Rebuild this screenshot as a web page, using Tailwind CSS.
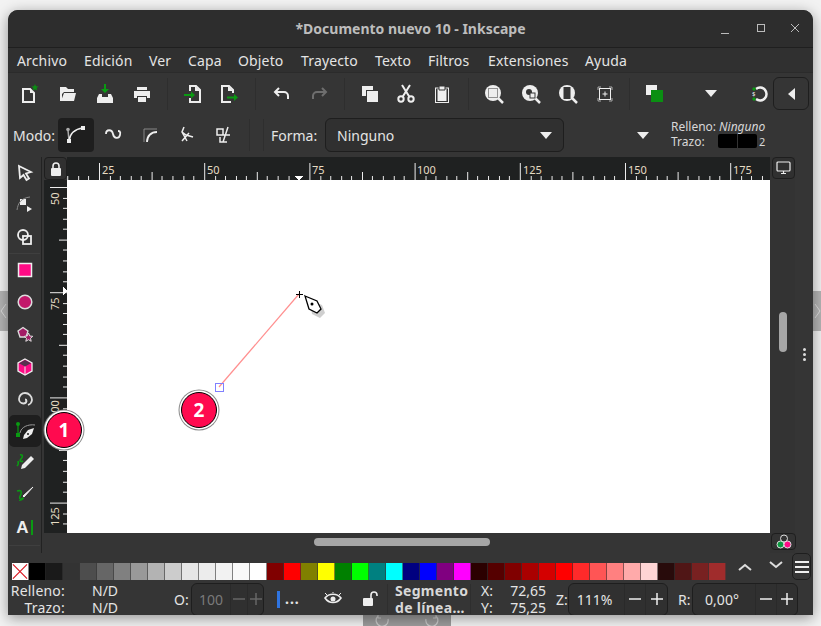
<!DOCTYPE html>
<html>
<head>
<meta charset="utf-8">
<title>Documento nuevo 10 - Inkscape</title>
<script src="https://cdn.jsdelivr.net/npm/@tailwindcss/browser@4"></script>
</head>
<body class="w-[821px] h-[626px] overflow-hidden relative bg-[#f2f2f2] font-['Noto_Sans',sans-serif] text-[14px] text-[#e4e4e4]">

<!-- neighbouring windows peeking out -->
<div class="absolute left-0 top-[291px] w-[8px] h-[40px] bg-[#b4b4b4] flex items-center"><svg class="w-[8px] h-[20px]" viewBox="0 0 8 20"><path d="M6 3L1 10l5 7" fill="none" stroke="#ddd"/></svg></div>
<div class="absolute right-0 top-[291px] w-[8px] h-[40px] bg-[#b4b4b4] flex items-center"><svg class="w-[8px] h-[20px]" viewBox="0 0 8 20"><path d="M2 3l5 7-5 7" fill="none" stroke="#ddd"/></svg></div>
<div class="absolute left-[363px] top-[615px] w-[88px] h-[11px] bg-[#9c9c9c] flex justify-center gap-[32px] overflow-hidden">
  <svg class="w-[16px] h-[11px]" viewBox="0 0 16 11"><path d="M3 1a6 6 0 1 0 10 3M3 0v3h3" fill="none" stroke="#ccc" stroke-width="1.200"/></svg>
  <svg class="w-[16px] h-[11px]" viewBox="0 0 16 11"><path d="M13 1a6 6 0 1 1-10 3M13 0v3h-3" fill="none" stroke="#ccc" stroke-width="1.200"/></svg>
</div>

<div class="absolute left-[8px] top-[10px] w-[805px] h-[605px] flex flex-col rounded-t-[10px] bg-[#353535] shadow-[0_3px_14px_rgba(0,0,0,0.4)] overflow-hidden">

  <!-- title bar -->
  <div class="h-[38px] shrink-0 relative flex items-center justify-center bg-[#2d2d2d] border-b border-[#1f1f1f]">
    <span class="font-bold text-[#bdbdbd] text-[14px]">*Documento nuevo 10 - Inkscape</span>
    <div class="absolute right-0 top-0 h-full flex items-center">
      <svg class="w-[34px] h-[34px]" viewBox="0 0 34 34"><path d="M10 21.500h8" stroke="#bbb" stroke-width="1"/></svg>
      <svg class="w-[34px] h-[34px]" viewBox="0 0 34 34"><rect x="12.500" y="12.500" width="7" height="7" fill="none" stroke="#bbb"/></svg>
      <svg class="w-[34px] h-[34px]" viewBox="0 0 34 34"><path d="M12 12l8 8M20 12l-8 8" stroke="#bbb" stroke-width="1"/></svg>
    </div>
  </div>

  <!-- menu bar -->
  <div class="h-[25px] shrink-0 flex items-center pl-[9px] bg-[#303030] border-b border-[#2b2b2b] text-[14px] tracking-[0.15px]">
    <span class="w-[67px]">Archivo</span>
    <span class="w-[65px]">Edición</span>
    <span class="w-[39px]">Ver</span>
    <span class="w-[50px]">Capa</span>
    <span class="w-[63px]">Objeto</span>
    <span class="w-[74px]">Trayecto</span>
    <span class="w-[53px]">Texto</span>
    <span class="w-[60px]">Filtros</span>
    <span class="w-[97px]">Extensiones</span>
    <span>Ayuda</span>
  </div>

  <!-- commands bar -->
  <div class="h-[45px] shrink-0 flex items-center pb-[4px]">
    <div class="flex items-center pl-[2px]">
      <div class="w-[38px] flex justify-center"><svg class="w-[20px] h-[20px]" viewBox="0 0 20 20"><path d="M4 5h7l4 4v9H4z" fill="none" stroke="#eee" stroke-width="2"/><path d="M11 5v4h4" fill="#eee"/><path d="M16 0l1 2.300 2.500.2-1.900 1.600.6 2.400L16 5.200l-2.200 1.300.6-2.400-1.900-1.600 2.500-.2z" fill="#0a8f12"/></svg></div>
      <div class="w-[38px] flex justify-center ml-[1px] -mr-[1px]"><svg class="w-[20px] h-[20px]" viewBox="0 0 20 20"><path d="M2 3h6l2 2h6v3H6L4 10v7H2z" fill="#eee"/><path d="M6 9h12l-2 8H3z" fill="#eee"/></svg></div>
      <div class="w-[37px] flex justify-center"><svg class="w-[20px] h-[20px]" viewBox="0 0 20 20"><path d="M10 0v6" stroke="#0a9a12" stroke-width="2"/><path d="M6 5h8l-4 4z" fill="#0a9a12"/><path d="M4 10h3v3h6v-3h3l2 4v5H2v-5z" fill="#eee"/></svg></div>
      <div class="w-[37px] flex justify-center"><svg class="w-[20px] h-[20px]" viewBox="0 0 20 20"><path d="M5 3h10v3H5zM2 7h16v7h-3v-2H5v2H2zM6 13h8v5H6z" fill="#eee"/></svg></div>
    </div>
    <div class="w-px h-[32px] bg-[#2e2e2e] ml-[7px] mr-[7px]"></div>
    <div class="flex items-center">
      <div class="w-[36px] flex justify-center"><svg class="w-[20px] h-[20px]" viewBox="0 0 20 20"><path d="M7 7V2h6l4 4v12H7v-4" fill="none" stroke="#eee" stroke-width="2"/><path d="M12 2v5h5" fill="#eee"/><path d="M1 11h8" stroke="#0a9a12" stroke-width="2"/><path d="M8 7.500l4 3.500-4 3.500z" fill="#0a9a12"/></svg></div>
      <div class="w-[36px] flex justify-center"><svg class="w-[20px] h-[20px]" viewBox="0 0 20 20"><path d="M14 9V6l-4-4H3v16h9" fill="none" stroke="#eee" stroke-width="2"/><path d="M9 2v5h5" fill="#eee"/><path d="M8 13.500h8" stroke="#0a9a12" stroke-width="2"/><path d="M15 10l4 3.500-4 3.500z" fill="#0a9a12"/></svg></div>
    </div>
    <div class="w-px h-[32px] bg-[#2e2e2e] ml-[8px] mr-[7px]"></div>
    <div class="flex items-center">
      <div class="w-[37px] flex justify-center"><svg class="w-[20px] h-[20px]" viewBox="0 0 20 20"><path d="M7 4L3 8l4 4" fill="none" stroke="#eee" stroke-width="2"/><path d="M4 8h8a4 4 0 0 1 4 4v3" fill="none" stroke="#eee" stroke-width="2"/></svg></div>
      <div class="w-[37px] flex justify-center"><svg class="w-[20px] h-[20px]" viewBox="0 0 20 20"><path d="M13 4l4 4-4 4" fill="none" stroke="#6e6e6e" stroke-width="2"/><path d="M16 8H8a4 4 0 0 0-4 4v3" fill="none" stroke="#6e6e6e" stroke-width="2"/></svg></div>
    </div>
    <div class="w-px h-[32px] bg-[#2e2e2e] ml-[7px] mr-[6px]"></div>
    <div class="flex items-center">
      <div class="w-[37px] flex justify-center"><svg class="w-[20px] h-[20px]" viewBox="0 0 20 20"><path d="M2 2h11v4H6v6H2z" fill="#eee"/><path d="M7 7h11v11H7z" fill="#eee"/></svg></div>
      <div class="w-[36px] flex justify-center"><svg class="w-[20px] h-[20px]" viewBox="0 0 20 20"><circle cx="5" cy="15" r="2.700" fill="none" stroke="#eee" stroke-width="2"/><circle cx="15" cy="15" r="2.700" fill="none" stroke="#eee" stroke-width="2"/><path d="M6.500 13L14 1M13.500 13L6 1" stroke="#eee" stroke-width="2"/></svg></div>
      <div class="w-[36px] flex justify-center"><svg class="w-[20px] h-[20px]" viewBox="0 0 20 20"><rect x="3.500" y="4" width="13" height="14.500" fill="none" stroke="#eee"/><path d="M5.500 5h9v12h-9z" fill="#eee"/><path d="M7 2h6v4H7z" fill="#eee" stroke="#353535"/></svg></div>
    </div>
    <div class="w-px h-[32px] bg-[#2e2e2e] ml-[8px] mr-[6px]"></div>
    <div class="flex items-center">
      <div class="w-[37px] flex justify-center"><svg class="w-[20px] h-[20px]" viewBox="0 0 20 20"><circle cx="9" cy="9" r="8" fill="#eee"/><path d="M14 14l5 5" stroke="#eee" stroke-width="2.500"/><rect x="4.500" y="4.500" width="9" height="9" fill="none" stroke="#353535" stroke-dasharray="1 1"/></svg></div>
      <div class="w-[37px] flex justify-center"><svg class="w-[20px] h-[20px]" viewBox="0 0 20 20"><circle cx="9" cy="9" r="8" fill="#eee"/><path d="M14 14l5 5" stroke="#eee" stroke-width="2.500"/><circle cx="8" cy="8" r="3" fill="#353535"/><rect x="9" y="9" width="5" height="5" fill="#eee" stroke="#353535"/></svg></div>
      <div class="w-[37px] flex justify-center"><svg class="w-[20px] h-[20px]" viewBox="0 0 20 20"><circle cx="9" cy="9" r="8" fill="#eee"/><path d="M14 14l5 5" stroke="#eee" stroke-width="2.500"/><rect x="5.500" y="3" width="7" height="12" fill="#353535"/></svg></div>
      <div class="w-[37px] flex justify-center"><svg class="w-[20px] h-[20px]" viewBox="0 0 20 20"><path d="M3 6V3h3M14 3h3v3M17 14v3h-3M6 17H3v-3" fill="none" stroke="#aaa"/><rect x="4.500" y="4.500" width="11" height="11" fill="none" stroke="#eee"/><path d="M7.500 10h5M10 7.500v5" stroke="#eee"/></svg></div>
    </div>
    <div class="w-px h-[32px] bg-[#2e2e2e] ml-[6px] mr-[6px]"></div>
    <div class="w-[38px] flex justify-center"><svg class="w-[20px] h-[20px]" viewBox="0 0 20 20"><path d="M1 1h11v5H6v5H1z" fill="#eee"/><rect x="6" y="6" width="12" height="12" fill="#0a8f12"/></svg></div>
    <div class="w-[74px] flex justify-center"><svg class="w-[12px] h-[7px]" viewBox="0 0 12 7"><path d="M0 0h12L6 7z" fill="#eee"/></svg></div>
    <div class="w-[21px] flex justify-center shrink-0"><svg class="w-[20px] h-[20px] shrink-0" viewBox="0 0 20 20"><path d="M7 4.900a6.500 6.500 0 1 1 0 10.200" fill="none" stroke="#eee" stroke-width="2.500"/><circle cx="5" cy="5" r="1.700" fill="#0a9a12"/><circle cx="5" cy="15" r="1.700" fill="#0a9a12"/><text x="3" y="12" font-size="6" fill="#eee">$</text></svg></div>
    <div class="ml-[4px] w-[36px] h-[33px] rounded-[6px] border border-[#1e1e1e] flex items-center justify-center"><svg class="w-[7px] h-[12px]" viewBox="0 0 7 12"><path d="M7 0v12L0 6z" fill="#eee"/></svg></div>
  </div>

  <!-- tool controls -->
  <div class="h-[39px] shrink-0 flex items-center pb-[5px]">
    <span class="ml-[5px] w-[45px]">Modo:</span>
    <div class="w-[36px] h-[34px] rounded-[4px] bg-[#1e1e1e] flex items-center justify-center"><svg class="w-[22px] h-[22px]" viewBox="0 0 22 22"><path d="M4 17L3 6" stroke="#aaa" stroke-width="1.500"/><path d="M4 17C5 9 10 5 18 4" fill="none" stroke="#eee" stroke-width="1.500"/><rect x="2" y="15" width="4" height="4" fill="#eee"/><rect x="16" y="2" width="4" height="4" fill="#eee"/><circle cx="3" cy="5.500" r="1.800" fill="#aaa"/></svg></div>
    <div class="w-[37px] flex justify-center"><svg class="w-[20px] h-[20px]" viewBox="0 0 20 20"><path d="M3 9c0-5 6-5 7 0s6 5 7 1-1-4-2-4" fill="none" stroke="#eee" stroke-width="1.800"/></svg></div>
    <div class="w-[37px] flex justify-center"><svg class="w-[20px] h-[20px]" viewBox="0 0 20 20"><path d="M4 17V4h13" fill="none" stroke="#888"/><path d="M7 17c0-6 4-10 10-10" fill="none" stroke="#eee" stroke-width="1.800"/></svg></div>
    <div class="w-[37px] flex justify-center"><svg class="w-[20px] h-[20px]" viewBox="0 0 20 20"><path d="M7 2L5 7l5 9M5 7l4 3 7 2M12 8l-7 8" fill="none" stroke="#eee" stroke-width="1.500"/></svg></div>
    <div class="w-[37px] flex justify-center"><svg class="w-[20px] h-[20px]" viewBox="0 0 20 20"><path d="M3 4h6v6H3zM9 10h7M14 2L9 17M6 12v5h7" fill="none" stroke="#eee" stroke-width="1.500"/></svg></div>
    <div class="w-px h-[32px] bg-[#2e2e2e] ml-[7px]"></div>
    <div class="w-px h-[32px] bg-[#2e2e2e] ml-[13px]"></div>
    <span class="ml-[7px] w-[54px]">Forma:</span>
    <div class="w-[239px] h-[34px] rounded-[6px] border border-[#1e1e1e] bg-[#303030] flex items-center justify-between pl-[11px] pr-[11px]">
      <span>Ninguno</span>
      <svg class="w-[12px] h-[7px]" viewBox="0 0 12 7"><path d="M0 0h12L6 7z" fill="#eee"/></svg>
    </div>
    <svg class="w-[12px] h-[7px] ml-[73px]" viewBox="0 0 12 7"><path d="M0 0h12L6 7z" fill="#eee"/></svg>
    <div class="ml-[22px] -mt-[3px] flex flex-col text-[12px] leading-[15px] text-[#d8d8d8]">
      <div class="flex"><span>Relleno:</span><span class="italic ml-[3px]">Ninguno</span></div>
      <div class="flex items-center"><span class="w-[47px]">Trazo:</span><div class="w-[39px] h-[14px] rounded-[2px] bg-black flex justify-center"><div class="w-px bg-[#333]"></div></div><span class="ml-[2px] text-[11px]">2</span></div>
    </div>
  </div>

  <!-- main area -->
  <div class="h-[396px] shrink-0 flex">
    <!-- toolbox -->
    <div class="w-[34px] shrink-0 border-r border-[#222] flex flex-col items-center">
      <div class="h-[32px] flex items-center"><svg class="w-[18px] h-[18px]" viewBox="0 0 18 18"><path d="M3 2l12 6-5 1.500 3 5-2.500 1.500-3-5L4 14z" fill="none" stroke="#eee" stroke-width="1.800"/></svg></div>
      <div class="h-[32px] flex items-center"><svg class="w-[18px] h-[18px]" viewBox="0 0 18 18"><rect x="4" y="3" width="6" height="6" fill="#eee"/><path d="M1 14C2 7 5 2 14 1" fill="none" stroke="#888"/><path d="M11 10l5 3-5 3z" fill="#eee"/></svg></div>
      <div class="h-[32px] flex items-center"><svg class="w-[18px] h-[18px]" viewBox="0 0 18 18"><circle cx="7" cy="7" r="5" fill="none" stroke="#eee" stroke-width="1.800"/><rect x="7" y="8" width="8" height="8" fill="none" stroke="#eee" stroke-width="1.800"/></svg></div>
      <div class="w-[31px] h-px bg-[#3f3f3f]"></div>
      <div class="h-[32px] flex items-center"><svg class="w-[18px] h-[18px]" viewBox="0 0 18 18"><rect x="2.500" y="2.500" width="13" height="13" fill="#ff0a85" stroke="#eee" stroke-width="1.500"/></svg></div>
      <div class="h-[32px] flex items-center"><svg class="w-[18px] h-[18px]" viewBox="0 0 18 18"><circle cx="9" cy="9" r="6.800" fill="#c2186b" stroke="#ddd" stroke-width="1.500"/></svg></div>
      <div class="h-[33px] flex items-center"><svg class="w-[18px] h-[18px]" viewBox="0 0 18 18"><path d="M7 1.500L12 5 10 11H4L2 5z" fill="#a31c66" stroke="#ddd" stroke-width="1.300"/><path d="M12.500 7l1.300 3 3 .3-2.300 2 .7 3-2.700-1.600-2.700 1.600.7-3-2.300-2 3-.3z" fill="#a31c66" stroke="#ddd"/></svg></div>
      <div class="h-[31px] flex items-center"><svg class="w-[18px] h-[18px]" viewBox="0 0 18 18"><path d="M9 1l7 4v8l-7 4-7-4V5z" fill="#ff0a85" stroke="#eee" stroke-width="1.300"/><path d="M9 2l6 3.200L9 8.500 3 5.200z" fill="#5a3050"/><path d="M9 8.500V17" stroke="#eee"/></svg></div>
      <div class="h-[33px] flex items-center"><svg class="w-[18px] h-[18px]" viewBox="0 0 18 18"><path d="M9 9.500a1.500 1.500 0 0 1 1.500 1.500 3 3 0 0 1-3 2.500A4.500 4.500 0 0 1 3 9a6 6 0 0 1 6-6 7 7 0 0 1 7 7 6 6 0 0 1-4 5" fill="none" stroke="#ddd" stroke-width="1.800"/></svg></div>
      <div class="h-[32px] w-[32px] rounded-[5px] bg-[#1e1e1e] flex items-center justify-center"><svg class="w-[22px] h-[22px]" viewBox="0 0 22 22"><path d="M4 4l0 12" stroke="#0a9a12" stroke-width="1.200"/><circle cx="4" cy="4" r="2" fill="#0a9a12"/><rect x="2" y="13" width="4" height="4" fill="#0a9a12"/><path d="M6 13c1-6 8-9 15-8" fill="none" stroke="#999"/><path d="M20 8l-2 6-5 4-4 1 1-4 4-5z" fill="#eee"/><circle cx="14" cy="14" r="1" fill="#1e1e1e"/></svg></div>
      <div class="h-[32px] flex items-center"><svg class="w-[20px] h-[20px]" viewBox="0 0 20 20"><path d="M5 2c3-1 3 2 1 4s0 3 2 2M3 8c1 3 0 4-1 5" fill="none" stroke="#0a9a12" stroke-width="1.600"/><path d="M16 3l3 3-9 9-4 1 1-4z" fill="#eee"/></svg></div>
      <div class="h-[32px] flex items-center"><svg class="w-[20px] h-[20px]" viewBox="0 0 20 20"><path d="M2 6c4-1 5 0 4 3s-2 3-1 5" fill="none" stroke="#0a9a12" stroke-width="1.600"/><path d="M18 2L9 12l-1-1z" fill="#eee" stroke="#eee"/><path d="M8 12c-1 1-3 1-4 4 2 0 5-1 5-3z" fill="#0a9a12"/></svg></div>
      <div class="h-[33px] flex items-center gap-[2px]"><span class="font-bold text-[17px] text-[#eee] leading-none font-['Liberation_Sans',sans-serif]">A</span><span class="w-[2px] h-[15px] bg-[#0a9a12]"></span></div>
      <div class="w-[31px] h-px bg-[#3f3f3f] mt-[1px]"></div>
    </div>

    <!-- rulers, canvas and bottom scrollbar -->
    <div class="w-[726px] ml-[2px] shrink-0 flex flex-col">
      <div class="h-[23px] flex">
        <div class="w-[23px] h-[23px] rounded-[4px] border border-[#1e1e1e] bg-[#303030] flex items-center justify-center"><svg class="w-[12px] h-[14px]" viewBox="0 0 12 14"><path d="M3 6V4a3 3 0 0 1 6 0v2" fill="none" stroke="#eee" stroke-width="1.600"/><rect x="1" y="6" width="10" height="8" rx="1" fill="#eee"/></svg></div>
        <svg class="w-[703px] h-[23px] bg-[#1f2121]" viewBox="0 0 703 23" font-family="'Noto Sans',sans-serif" font-size="11" fill="#e6dcc4" shape-rendering="crispEdges">
          <defs><pattern id="rulerH" patternUnits="userSpaceOnUse" x="32" y="0" width="105.200" height="23">
            <path d="M.5 6v17M11 19v4M21.500 19v4M32 19v4M42.500 19v4M53 15v8M63.500 19v4M74 19v4M84.500 19v4M95 19v4" stroke="#eee" fill="none"/>
          </pattern></defs>
          <rect width="703" height="23" fill="url(#rulerH)"/>
          <text x="35" y="17">25</text><text x="140" y="17">50</text><text x="245" y="17">75</text><text x="350" y="17">100</text><text x="456" y="17">125</text><text x="561" y="17">150</text><text x="666" y="17">175</text>
          <path d="M227 19h10l-5 4z" fill="#fff"/>
        </svg>
      </div>
      <div class="h-[353px] flex">
        <svg class="w-[23px] h-[353px] bg-[#1f2121]" viewBox="0 0 23 353" font-family="'Noto Sans',sans-serif" font-size="11" fill="#e6dcc4" shape-rendering="crispEdges">
          <defs><pattern id="rulerV" patternUnits="userSpaceOnUse" x="0" y="7" width="23" height="105.200">
            <path d="M6 .5h17M19 11h4M19 21.500h4M19 32h4M19 42.500h4M15 53h8M19 63.500h4M19 74h4M19 84.500h4M19 95h4" stroke="#eee" fill="none"/>
          </pattern></defs>
          <rect width="23" height="353" fill="url(#rulerV)"/>
          <text transform="translate(15 25) rotate(-90)">50</text>
          <text transform="translate(15 130) rotate(-90)">75</text>
          <text transform="translate(15 239) rotate(-90)">100</text>
          <text transform="translate(15 346) rotate(-90)">125</text>
          <path d="M19 106l4 5-4 5z" fill="#fff"/>
        </svg>
        <!-- canvas -->
        <div class="w-[703px] h-[353px] bg-white relative">
          <svg class="absolute left-0 top-0 w-[703px] h-[353px]" viewBox="0 0 703 353">
            <path d="M152 207L232 114" stroke="#ff8f8f" stroke-width="1.200"/>
            <rect x="148.500" y="203.500" width="8" height="8" fill="none" stroke="#8080ff"/>
            <path d="M229 114.500h7M232.500 111v7" stroke="#000" stroke-width="1"/>
            <path d="M240 119l13 5 3 8-5 5-8-4z" fill="#cfcfcf" transform="translate(2 1)"/>
            <path d="M238 116l12 5 4 8-4 4-8-4z" fill="#fff" stroke="#000" stroke-width="1.300"/>
            <circle cx="245" cy="124" r="1.500" fill="#000"/>
          </svg>
        </div>
      </div>
      <div class="h-[20px] flex justify-center pt-[5px] pr-[10px]"><div class="w-[176px] h-[8px] rounded-full bg-[#a6a6a6]"></div></div>
    </div>

    <!-- right gutter -->
    <div class="w-[25px] shrink-0 bg-[#333333] flex flex-col items-center relative">
      <div class="absolute left-[2px] top-0 w-[23px] h-[22px] rounded-[4px] border border-[#1e1e1e] bg-[#303030] flex items-center justify-center"><svg class="w-[15px] h-[14px]" viewBox="0 0 15 14"><rect x="1" y="1" width="13" height="9" rx="1" fill="none" stroke="#eee" stroke-width="1.200"/><path d="M5 12.500h5M7.500 10v2" stroke="#eee" stroke-width="1.200"/></svg></div>
      <div class="mt-[155px] w-[8px] h-[40px] rounded-full bg-[#a6a6a6]"></div>
      <div class="absolute left-[1px] top-[376px] w-[25px] h-[17px] rounded-[4px] border border-[#1e1e1e] flex items-center justify-center"><svg class="w-[18px] h-[15px]" viewBox="0 0 18 15"><circle cx="9" cy="4.500" r="3.500" fill="none" stroke="#ddd"/><circle cx="5.500" cy="10.500" r="3.500" fill="#0a9a40" stroke="#ddd"/><circle cx="12.500" cy="10.500" r="3.500" fill="#ff0a85" stroke="#ddd"/></svg></div>
    </div>
    <div class="w-[18px] shrink-0 flex flex-col items-center gap-[2px] pt-[191px]">
      <div class="w-[3px] h-[3px] rounded-full bg-[#ddd]"></div>
      <div class="w-[3px] h-[3px] rounded-full bg-[#ddd]"></div>
      <div class="w-[3px] h-[3px] rounded-full bg-[#ddd]"></div>
    </div>
  </div>

  <!-- palette -->
  <div class="h-[29px] shrink-0 flex items-start">
    <div class="mt-[10px] ml-[4px] flex h-[17px] *:border-r *:border-[#353535]/60">
      <svg class="w-[17px] h-[17px] bg-white" viewBox="0 0 17 17"><path d="M1 1l15 15M16 1L1 16" stroke="#d8141e" stroke-width="1.200"/></svg>
      <div class="w-[17px] bg-[#000000]"></div><div class="w-[17px] bg-[#1a1a1a]"></div><div class="w-[17px] bg-[#333333]"></div><div class="w-[17px] bg-[#4d4d4d]"></div><div class="w-[17px] bg-[#666666]"></div><div class="w-[17px] bg-[#808080]"></div><div class="w-[17px] bg-[#999999]"></div><div class="w-[17px] bg-[#b3b3b3]"></div><div class="w-[17px] bg-[#cccccc]"></div><div class="w-[17px] bg-[#e6e6e6]"></div><div class="w-[17px] bg-[#ececec]"></div><div class="w-[17px] bg-[#f2f2f2]"></div><div class="w-[17px] bg-[#f9f9f9]"></div><div class="w-[17px] bg-[#ffffff]"></div>
      <div class="w-[17px] bg-[#800000]"></div><div class="w-[17px] bg-[#ff0000]"></div><div class="w-[17px] bg-[#808000]"></div><div class="w-[17px] bg-[#ffff00]"></div><div class="w-[17px] bg-[#008000]"></div><div class="w-[17px] bg-[#00ff00]"></div><div class="w-[17px] bg-[#008080]"></div><div class="w-[17px] bg-[#00ffff]"></div><div class="w-[17px] bg-[#000080]"></div><div class="w-[17px] bg-[#0000ff]"></div><div class="w-[17px] bg-[#800080]"></div><div class="w-[17px] bg-[#ff00ff]"></div>
      <div class="w-[17px] bg-[#2b0000]"></div><div class="w-[17px] bg-[#550000]"></div><div class="w-[17px] bg-[#800000]"></div><div class="w-[17px] bg-[#aa0000]"></div><div class="w-[17px] bg-[#d40000]"></div><div class="w-[17px] bg-[#ff0000]"></div><div class="w-[17px] bg-[#ff2a2a]"></div><div class="w-[17px] bg-[#ff5555]"></div><div class="w-[17px] bg-[#ff8080]"></div><div class="w-[17px] bg-[#ffaaaa]"></div><div class="w-[17px] bg-[#ffd5d5]"></div>
      <div class="w-[17px] bg-[#280b0b]"></div><div class="w-[17px] bg-[#501616]"></div><div class="w-[17px] bg-[#782121]"></div><div class="w-[17px] bg-[#a02c2c]"></div>
    </div>
    <svg class="w-[14px] h-[8px] ml-[12px] mt-[10px]" viewBox="0 0 14 8"><path d="M1 7l6-5 6 5" fill="none" stroke="#ddd" stroke-width="2"/></svg>
    <svg class="w-[14px] h-[8px] ml-[17px] mt-[8px]" viewBox="0 0 14 8"><path d="M1 1l6 5 6-5" fill="none" stroke="#ddd" stroke-width="2"/></svg>
    <div class="ml-[9px] w-[19px] h-[27px] rounded-[5px] border border-[#1e1e1e] flex flex-col items-center justify-center gap-[3px]">
      <div class="w-[14px] h-[2px] bg-[#eee]"></div><div class="w-[14px] h-[2px] bg-[#eee]"></div><div class="w-[14px] h-[2px] bg-[#eee]"></div>
    </div>
  </div>

  <!-- status bar -->
  <div class="flex-1 flex items-center text-[14px] leading-[17px]">
    <div class="w-[57px] text-right tracking-[0.2px]"><div>Relleno:</div><div>Trazo:</div></div>
    <div class="w-[40px] ml-[27px]"><div>N/D</div><div>N/D</div></div>
    <span class="ml-[42px] w-[17px]">O:</span>
    <div class="w-[73px] h-[33px] rounded-[6px] border border-[#1e1e1e] bg-[#303030] flex items-center text-[#7a7a7a]">
      <span class="w-[38px] text-center">100</span>
      <div class="w-[17px] h-full border-l border-[#2a2a2a] flex items-center justify-center"><svg class="w-[12px] h-[12px]" viewBox="0 0 12 12"><path d="M0 6h12" stroke="#666" stroke-width="1.500"/></svg></div>
      <div class="flex-1 h-full border-l border-[#2a2a2a] flex items-center justify-center"><svg class="w-[12px] h-[12px]" viewBox="0 0 12 12"><path d="M0 6h12M6 0v12" stroke="#666" stroke-width="1.500"/></svg></div>
    </div>
    <div class="ml-[13px] w-[3px] h-[17px] bg-[#2f74e0]"></div>
    <span class="ml-[5px] w-[32px] font-bold tracking-[1px] -mt-[2px]">...</span>
    <svg class="w-[18px] h-[14px] ml-[7px]" viewBox="0 0 18 14"><path d="M1 6c4-5 12-5 16 0-4 6-12 6-16 0z" fill="none" stroke="#eee" stroke-width="1.600"/><circle cx="9" cy="7" r="2.500" fill="#eee"/><path d="M3 3L1 1M15 3l2-2M9 1V0" stroke="#eee"/></svg>
    <svg class="w-[15px] h-[16px] ml-[21px]" viewBox="0 0 15 16"><path d="M8 7V4a3 3 0 0 1 6 0v1" fill="none" stroke="#eee" stroke-width="1.600"/><rect x="0" y="7" width="10" height="8" rx="1" fill="#eee"/></svg>
    <div class="w-px h-[30px] bg-[#2e2e2e] ml-[9px]"></div>
    <div class="ml-[7px] w-[75px] font-bold text-[14px] text-[#d8d8d8] tracking-[0.3px] leading-[17px] whitespace-nowrap"><div>Segmento</div><div>de línea…</div></div>
    <div class="w-px h-[30px] bg-[#2e2e2e]"></div>
    <div class="ml-[10px] w-[20px]"><div>X:</div><div>Y:</div></div>
    <div class="w-[45px] text-right"><div>72,65</div><div>75,25</div></div>
    <span class="ml-[10px] w-[12px]">Z:</span>
    <div class="w-[100px] h-[33px] rounded-[6px] border border-[#1e1e1e] bg-[#303030] flex items-center">
      <span class="w-[55px] text-center pr-[4px]">111%</span>
      <div class="w-[21px] h-full border-l border-[#2a2a2a] flex items-center justify-center"><svg class="w-[12px] h-[12px]" viewBox="0 0 12 12"><path d="M0 6h12" stroke="#eee" stroke-width="1.500"/></svg></div>
      <div class="flex-1 h-full border-l border-[#2a2a2a] flex items-center justify-center"><svg class="w-[12px] h-[12px]" viewBox="0 0 12 12"><path d="M0 6h12M6 0v12" stroke="#eee" stroke-width="1.500"/></svg></div>
    </div>
    <span class="ml-[10px] w-[14px]">R:</span>
    <div class="w-[106px] h-[33px] rounded-[6px] border border-[#1e1e1e] bg-[#303030] flex items-center">
      <span class="w-[62px] text-center pr-[4px]">0,00°</span>
      <div class="w-[21px] h-full border-l border-[#2a2a2a] flex items-center justify-center"><svg class="w-[12px] h-[12px]" viewBox="0 0 12 12"><path d="M0 6h12" stroke="#eee" stroke-width="1.500"/></svg></div>
      <div class="flex-1 h-full border-l border-[#2a2a2a] flex items-center justify-center"><svg class="w-[12px] h-[12px]" viewBox="0 0 12 12"><path d="M0 6h12M6 0v12" stroke="#eee" stroke-width="1.500"/></svg></div>
    </div>
  </div>
</div>

<!-- callout badges -->
<div class="absolute left-[46px] top-[412px] w-[36px] h-[36px] rounded-full bg-[#ff0a4f] border-[1.500px] border-black shadow-[0_0_0_1.500px_#fff,0_0_0_2.500px_#888] flex items-center justify-center font-bold text-white text-[19px] font-['Open_Sans',sans-serif]">1</div>
<div class="absolute left-[181px] top-[392px] w-[36px] h-[36px] rounded-full bg-[#ff0a4f] border-[1.500px] border-black shadow-[0_0_0_1.500px_#fff,0_0_0_2.500px_#888] flex items-center justify-center font-bold text-white text-[19px] font-['Open_Sans',sans-serif]">2</div>

</body>
</html>
